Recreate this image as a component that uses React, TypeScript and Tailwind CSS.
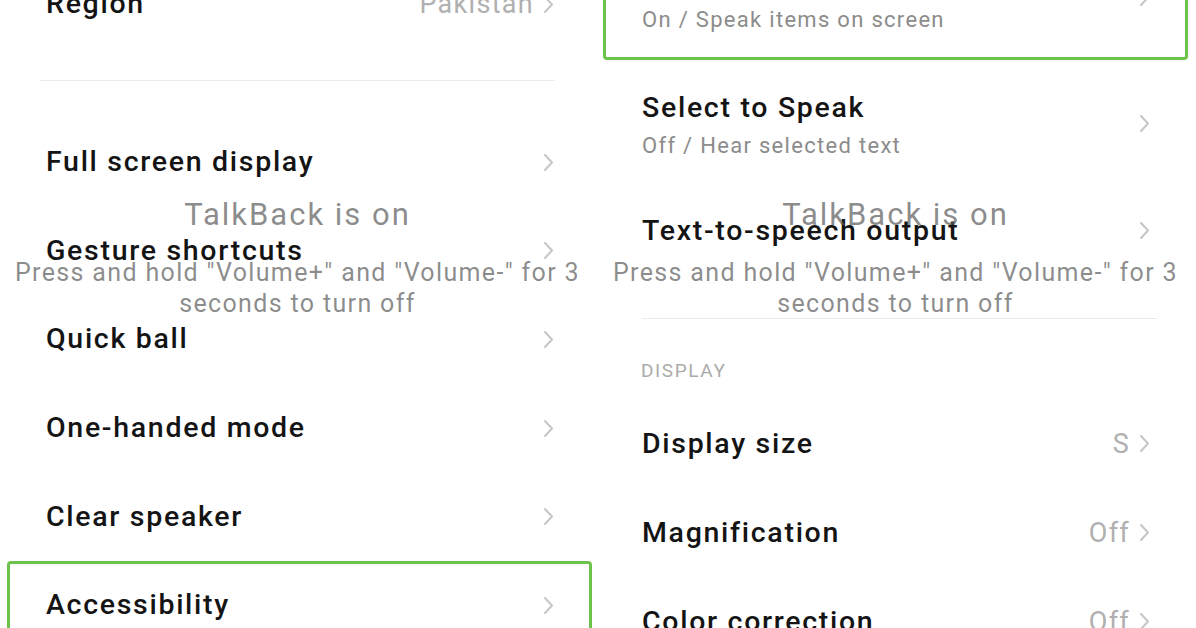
import clsx from "clsx";

type RowProps = {
  title: string;
  sub?: string;
  value?: string;
  active?: boolean;
  className?: string;
};

function Chevron() {
  return (
    <svg width="11" height="19" viewBox="0 0 11 19" className="shrink-0" aria-hidden>
      <polyline points="2,2 9,9.5 2,17" fill="none" stroke="#c6c6c6" strokeWidth="2" strokeLinecap="round" strokeLinejoin="round" />
    </svg>
  );
}

function Row({ title, sub, value, active, className }: RowProps) {
  return (
    <div
      className={clsx(
        "flex w-[585px] shrink-0 items-center justify-between rounded-[4px] border-[3px] pl-[36px] pr-[35px]",
        active ? "border-[#6dc24b]" : "border-transparent",
        className
      )}
    >
      <div className={clsx("flex flex-col", sub && "pt-[5px]")}>
        <span className="text-[28.5px] leading-[34px] font-medium tracking-[1.7px] text-[#141414]">{title}</span>
        {sub && <span className="mt-[7px] text-[22px] leading-[28px] tracking-[1.3px] text-[#8c8c8c]">{sub}</span>}
      </div>
      <div className="flex items-center gap-[9px]">
        {value && <span className="text-[27px] leading-[30px] tracking-[1.3px] text-[#b0b0b0]">{value}</span>}
        <Chevron />
      </div>
    </div>
  );
}

function Divider({ className }: { className?: string }) {
  return <div className={clsx("h-px w-[515px] shrink-0 bg-[#ebebeb]", className)} />;
}

function Toast() {
  return (
    <div className="pointer-events-none absolute left-0 right-0 top-[197px] text-center text-[rgba(95,95,95,0.72)]">
      <div className="text-[31px] leading-[36px] tracking-[2px]">TalkBack is on</div>
      <div className="mt-[24px] text-[25px] leading-[31px] tracking-[1.35px]">
        Press and hold "Volume+" and "Volume-" for 3
      </div>
      <div className="text-[25px] leading-[31px] tracking-[1.35px]">seconds to turn off</div>
    </div>
  );
}

export default function App() {
  return (
    <div className="flex h-[628px] w-[1196px] overflow-hidden bg-white font-['Roboto','Noto_Sans',sans-serif]">
      {/* left screen */}
      <div className="relative flex h-full w-[595px] shrink-0 flex-col pl-[7px]">
        <Row title="Region" value="Pakistan" className="-mt-[40px] h-[88px]" />
        <Divider className="mt-[32px] ml-[33px]" />
        <div className="mt-[37px] flex flex-col">
          <Row title="Full screen display" className="h-[88.6px]" />
          <Row title="Gesture shortcuts" className="h-[88.6px]" />
          <Row title="Quick ball" className="h-[88.6px]" />
          <Row title="One-handed mode" className="h-[88.6px]" />
          <Row title="Clear speaker" className="h-[88.6px]" />
          <Row title="Accessibility" active className="h-[88.6px]" />
        </div>
        <Toast />
      </div>

      {/* right screen */}
      <div className="relative flex h-full flex-1 flex-col pl-[8px]">
        <Row title="TalkBack" sub="On / Speak items on screen" active className="-mt-[66px] h-[126px]" />
        <Row title="Select to Speak" sub="Off / Hear selected text" className="h-[126px]" />
        <Row title="Text-to-speech output" className="h-[89px]" />
        <Divider className="mt-[43px] ml-[39px] w-[510px]" />
        <div className="flex h-[80px] shrink-0 items-end pb-[17px] pl-[38px]">
          <span className="text-[19px] leading-[22px] tracking-[1.6px] text-[#ababab]">DISPLAY</span>
        </div>
        <Row title="Display size" value="S" className="h-[89px]" />
        <Row title="Magnification" value="Off" className="h-[89px]" />
        <Row title="Color correction" value="Off" className="h-[89px]" />
        <Toast />
      </div>
    </div>
  );
}
